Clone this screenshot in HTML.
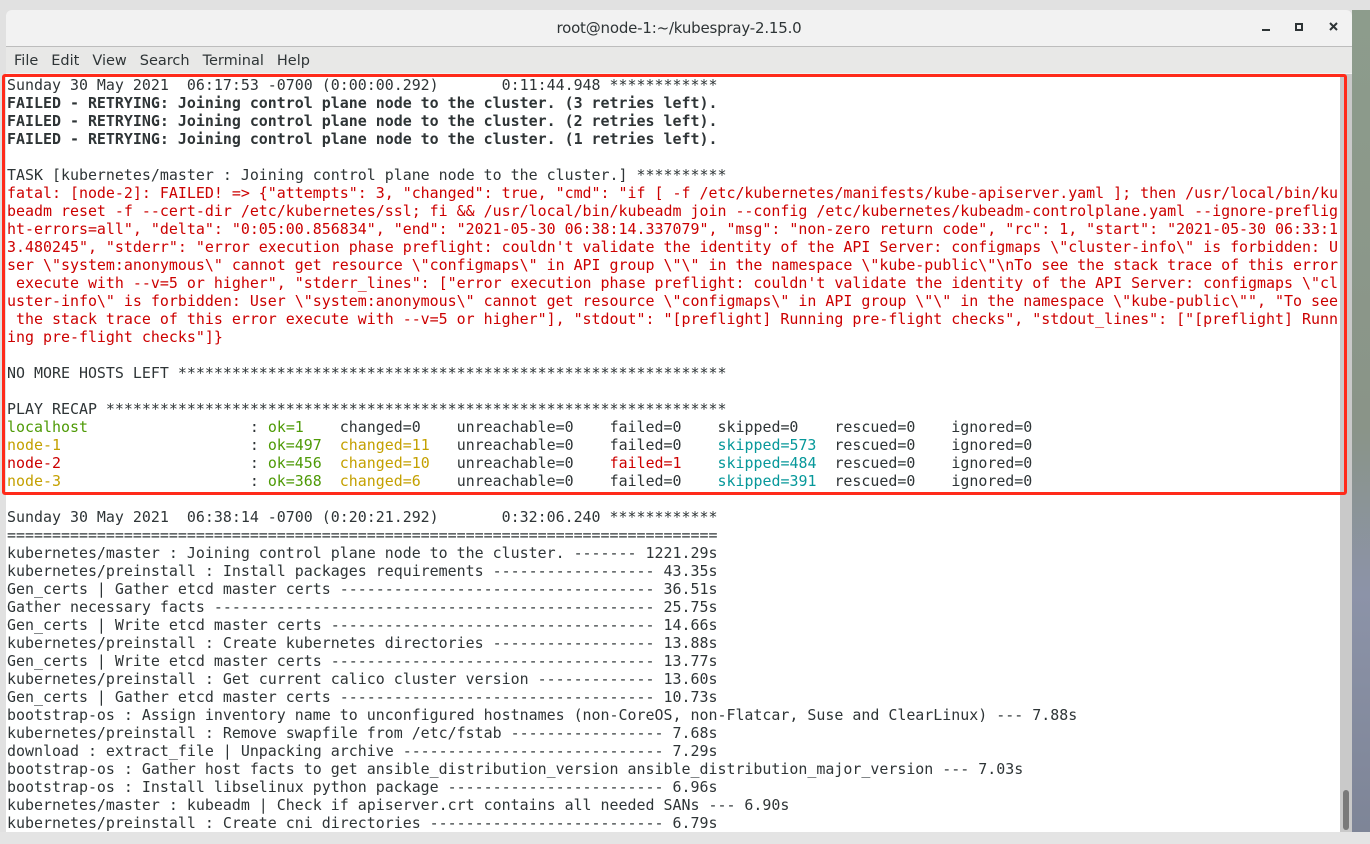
<!DOCTYPE html>
<html><head><meta charset="utf-8"><style>
body{margin:0;width:1370px;height:844px;overflow:hidden;background:#e1e1e1;position:relative;font-family:"DejaVu Sans","Liberation Sans",sans-serif}
#desk{position:absolute;left:1352px;top:10px;width:18px;height:834px;background:linear-gradient(#8d9c8c,#8a9488 50%,#8c93a8 70%,#7d8496)}
#win{position:absolute;left:6px;top:10px;width:1346px;height:822px;background:#f2f2f2;border-radius:6px 6px 0 0;overflow:hidden}
#title{height:36px;line-height:36px;text-align:center;font-size:15px;color:#2e3436;border-bottom:1px solid #bdbdbd;position:relative;letter-spacing:-0.2px}
#menu{height:26px;background:#e8e8e7;font-size:14.5px;color:#2e3436;line-height:28px;padding-left:8px}
#menu span{margin-right:13px}
#term{position:absolute;left:0;top:64px;width:1334px;height:758px;background:#fff}
#sb{position:absolute;left:1334px;top:64px;width:12px;height:758px;background:#c9c9c9}
#thumb{position:absolute;left:3px;top:716px;width:6px;height:40px;border-radius:3px;background:#7a7a7a}
pre{margin:0;position:absolute;left:1px;top:2px;font-family:"DejaVu Sans Mono","Liberation Mono",monospace;font-size:14.95px;line-height:18px;color:#2e3436}
.b{font-weight:bold}.r{color:#cc0000}.g{color:#4e9a06}.y{color:#c4a000}.c{color:#06989a}
#box{position:absolute;left:2px;top:74px;width:1339px;height:415px;border:3px solid #ff2a1a;border-radius:3px}
#bot{position:absolute;left:0;top:832px;width:1370px;height:12px;background:#e4e4e4}
</style></head><body>
<div id="desk"></div>
<div id="win">
<div id="title">root@node-1:~/kubespray-2.15.0</div>
<div id="menu"><span>File</span><span>Edit</span><span>View</span><span>Search</span><span>Terminal</span><span>Help</span></div>
<div id="term"><pre>Sunday 30 May 2021  06:17:53 -0700 (0:00:00.292)       0:11:44.948 ************
<span class="b">FAILED - RETRYING: Joining control plane node to the cluster. (3 retries left).
FAILED - RETRYING: Joining control plane node to the cluster. (2 retries left).
FAILED - RETRYING: Joining control plane node to the cluster. (1 retries left).</span>

TASK [kubernetes/master : Joining control plane node to the cluster.] **********
<span class="r">fatal: [node-2]: FAILED! =&gt; {"attempts": 3, "changed": true, "cmd": "if [ -f /etc/kubernetes/manifests/kube-apiserver.yaml ]; then /usr/local/bin/ku
beadm reset -f --cert-dir /etc/kubernetes/ssl; fi &amp;&amp; /usr/local/bin/kubeadm join --config /etc/kubernetes/kubeadm-controlplane.yaml --ignore-preflig
ht-errors=all", "delta": "0:05:00.856834", "end": "2021-05-30 06:38:14.337079", "msg": "non-zero return code", "rc": 1, "start": "2021-05-30 06:33:1
3.480245", "stderr": "error execution phase preflight: couldn't validate the identity of the API Server: configmaps \"cluster-info\" is forbidden: U
ser \"system:anonymous\" cannot get resource \"configmaps\" in API group \"\" in the namespace \"kube-public\"\nTo see the stack trace of this error
 execute with --v=5 or higher", "stderr_lines": ["error execution phase preflight: couldn't validate the identity of the API Server: configmaps \"cl
uster-info\" is forbidden: User \"system:anonymous\" cannot get resource \"configmaps\" in API group \"\" in the namespace \"kube-public\"", "To see
 the stack trace of this error execute with --v=5 or higher"], "stdout": "[preflight] Running pre-flight checks", "stdout_lines": ["[preflight] Runn
ing pre-flight checks"]}</span>

NO MORE HOSTS LEFT *************************************************************

PLAY RECAP *********************************************************************
<span class="g">localhost</span>                  : <span class="g">ok=1   </span> changed=0    unreachable=0    failed=0    skipped=0    rescued=0    ignored=0
<span class="y">node-1</span>                     : <span class="g">ok=497</span>  <span class="y">changed=11</span>   unreachable=0    failed=0    <span class="c">skipped=573</span>  rescued=0    ignored=0
<span class="r">node-2</span>                     : <span class="g">ok=456</span>  <span class="y">changed=10</span>   unreachable=0    <span class="r">failed=1</span>    <span class="c">skipped=484</span>  rescued=0    ignored=0
<span class="y">node-3</span>                     : <span class="g">ok=368</span>  <span class="y">changed=6</span>    unreachable=0    failed=0    <span class="c">skipped=391</span>  rescued=0    ignored=0

Sunday 30 May 2021  06:38:14 -0700 (0:20:21.292)       0:32:06.240 ************
===============================================================================
kubernetes/master : Joining control plane node to the cluster. ------- 1221.29s
kubernetes/preinstall : Install packages requirements ------------------ 43.35s
Gen_certs | Gather etcd master certs ----------------------------------- 36.51s
Gather necessary facts ------------------------------------------------- 25.75s
Gen_certs | Write etcd master certs ------------------------------------ 14.66s
kubernetes/preinstall : Create kubernetes directories ------------------ 13.88s
Gen_certs | Write etcd master certs ------------------------------------ 13.77s
kubernetes/preinstall : Get current calico cluster version ------------- 13.60s
Gen_certs | Gather etcd master certs ----------------------------------- 10.73s
bootstrap-os : Assign inventory name to unconfigured hostnames (non-CoreOS, non-Flatcar, Suse and ClearLinux) --- 7.88s
kubernetes/preinstall : Remove swapfile from /etc/fstab ----------------- 7.68s
download : extract_file | Unpacking archive ----------------------------- 7.29s
bootstrap-os : Gather host facts to get ansible_distribution_version ansible_distribution_major_version --- 7.03s
bootstrap-os : Install libselinux python package ------------------------ 6.96s
kubernetes/master : kubeadm | Check if apiserver.crt contains all needed SANs --- 6.90s
kubernetes/preinstall : Create cni directories -------------------------- 6.79s</pre></div>
<div id="sb"><div id="thumb"></div></div>
</div>
<div id="box"></div>
<div id="bot"></div>
<svg style="position:absolute;left:1250px;top:14px" width="100" height="30">
<rect x="12" y="15" width="8" height="2" fill="#2e3436"/>
<rect x="46" y="10" width="6" height="6" fill="none" stroke="#2e3436" stroke-width="2"/>
<path d="M80 9 L87 16 M87 9 L80 16" stroke="#2e3436" stroke-width="2"/>
</svg>
</body></html>
